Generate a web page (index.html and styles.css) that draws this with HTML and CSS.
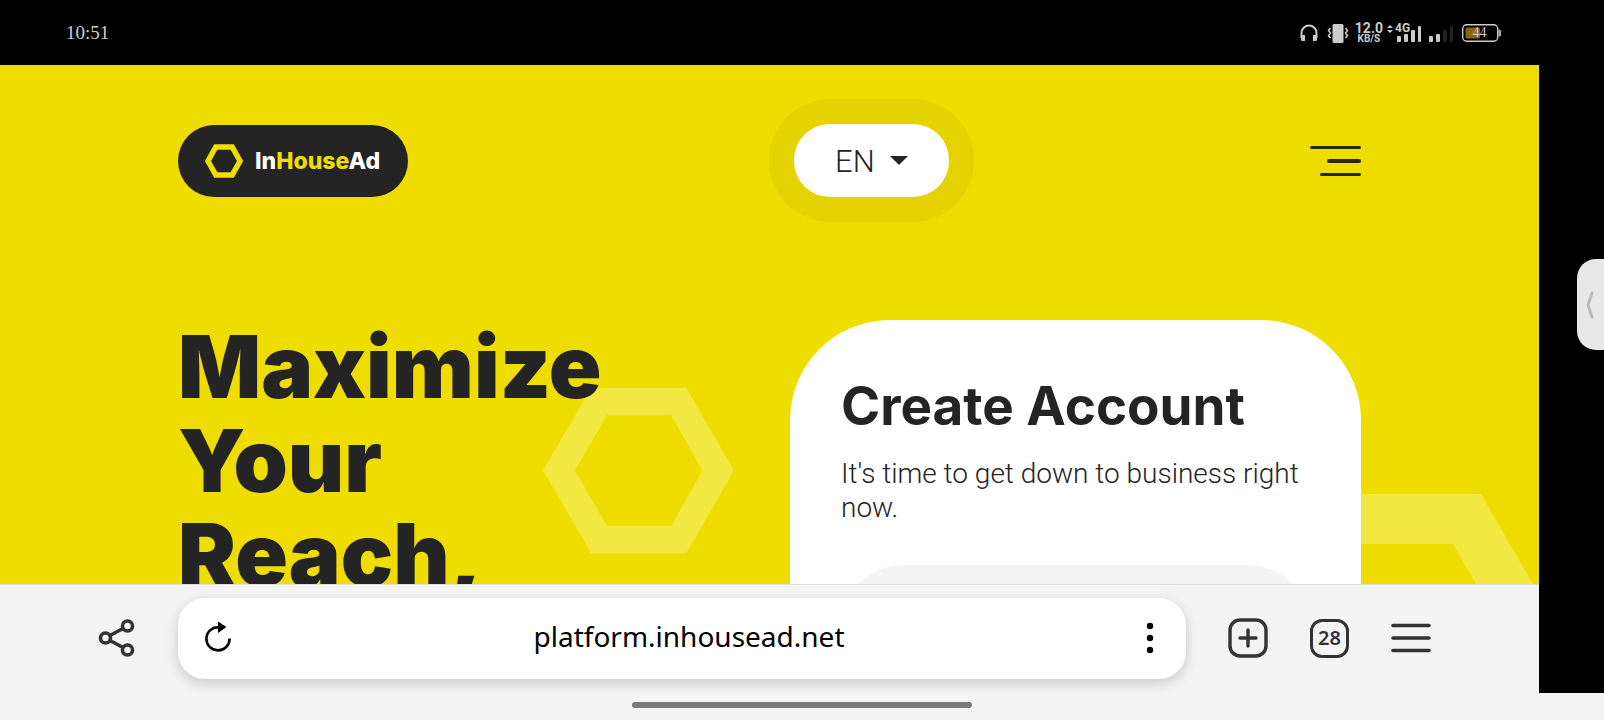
FILE: index.html
```html
<!DOCTYPE html>
<html lang="en">
<head>
<meta charset="utf-8">
<meta name="viewport" content="width=device-width, initial-scale=1">
<title>InHouseAd</title>
<link rel="stylesheet" href="styles.css">
</head>
<body>
<div class="screen">
  <div class="status">
    <time class="clock">10:51</time>
    <div class="status-icons">
      <svg class="headphones" width="18" height="18" viewBox="0 0 18 18"><path d="M1.500 14V9a7.500 7.500 0 0 1 15 0v5" fill="none" stroke="#ccc" stroke-width="2"/><path d="M1 11h4v6H2.500A1.500 1.500 0 0 1 1 15.500zM17 11h-4v6h2.500a1.500 1.500 0 0 0 1.500-1.500z" fill="#ccc"/></svg>
      <svg class="vibrate" width="22" height="20" viewBox="0 0 22 20"><rect x="5.500" y="1" width="11" height="19" rx="1.500" fill="#ccc"/><path d="M3.500 5 1.500 7.500l2 2.500-2 2.500 2 2.500M18.500 5l2 2.500-2 2.500 2 2.500-2 2.500" fill="none" stroke="#ccc" stroke-width="1.500"/></svg>
      <div class="speed"><span class="speed-value">12.0</span><span class="speed-unit">KB/S</span></div>
      <div class="network">
        <svg width="36" height="20" viewBox="0 0 36 20"><path d="M0 5 3 2l3 3zM0 7l3 3 3-3z" fill="#ccc"/><g fill="#ccc"><rect x="10" y="13" width="4" height="6" rx="1"/><rect x="17" y="11" width="4" height="8" rx="1"/><rect x="24" y="7" width="4" height="12" rx="1"/><rect x="31" y="3" width="3" height="16" rx="1"/></g></svg>
        <span class="network-type">4G</span>
      </div>
      <svg class="signal" width="24" height="20" viewBox="0 0 24 20"><g fill="#ccc"><rect x="0" y="13" width="4" height="6" rx="1"/><rect x="7" y="11" width="4" height="8" rx="1"/></g><g fill="#222"><rect x="14" y="7" width="4" height="12" rx="1"/><rect x="21" y="3" width="3" height="16" rx="1"/></g></svg>
      <div class="battery">
        <svg width="39" height="18" viewBox="0 0 39 18"><rect x=".7" y=".7" width="35" height="16.500" rx="4" fill="none" stroke="#ccc" stroke-width="1.400"/><rect x="3.500" y="3.500" width="14.500" height="11" rx="1.500" fill="#8c640e"/><path d="M36.500 5.500h1q1.500 0 1.500 1.500v4q0 1.500-1.500 1.500h-1z" fill="#aaa"/></svg>
        <span class="battery-level">44</span>
      </div>
    </div>
  </div>

  <div class="middle">
    <div class="browser">
      <main class="page">
        <svg class="hexagon hexagon-small" viewBox="0 0 191 165"><path fill-rule="evenodd" d="M48 0h95.500L191 82.500 143.500 165H48L0 82.500zM64 27 32 82.500 64 138h64l31.500-55.500L128 27z"/></svg>
        <svg class="hexagon hexagon-large" viewBox="0 0 353 305"><path fill-rule="evenodd" d="M88 0h177l88 152.500L265 305H88L0 152.500zM117 50 58 152.500 117 255h120l59-102.500L237 50z"/></svg>
        <header class="header columns">
          <div>
            <a class="logo" href="#">
              <svg width="38" height="34" viewBox="0 0 38 34"><path d="M10.800 3h16.400l7.800 14-7.800 14H10.800L3 17z" fill="none" stroke="#efdd00" stroke-width="5.500"/></svg>
              <span class="logo-name">In<span class="logo-accent">House</span>Ad</span>
            </a>
          </div>
          <div class="header-tools">
            <div class="language">
              <select class="language-select" aria-label="Language"><option>EN</option></select>
              <svg class="language-caret" width="18" height="9" viewBox="0 0 18 9"><path d="M0 0h18L9 9z" fill="#242424"/></svg>
            </div>
            <button class="menu-button" type="button" aria-label="Menu"><svg width="51" height="30" viewBox="0 0 51 30" stroke="#262a08" stroke-linecap="round"><path d="M1.500 1.500h48M11.500 28.500h38" stroke-width="3"/><path d="M19 15h30" stroke-width="4"/></svg></button>
          </div>
        </header>
        <div class="hero columns">
          <h1 class="headline">Maximize Your Reach,</h1>
          <form class="card">
            <h2 class="card-title">Create Account</h2>
            <p class="card-text">It's time to get down to business right now.</p>
            <input class="card-field" type="text" aria-label="Email">
          </form>
        </div>
      </main>
      <div class="toolbar">
        <button class="tool" type="button" aria-label="Share"><svg width="38" height="38" viewBox="0 0 38 38" fill="none" stroke="#333" stroke-width="3.600"><circle cx="7.500" cy="19" r="5"/><circle cx="29.500" cy="7" r="5"/><circle cx="29.500" cy="31" r="5"/><path d="m12 16.500 13-7M12 21.500l13 7"/></svg></button>
        <div class="address">
          <button class="tool" type="button" aria-label="Reload"><svg width="28" height="32" viewBox="0 0 28 32"><path d="M14.500 5.200A11.600 11.600 0 1 0 25.600 16.500" fill="none" stroke="#000" stroke-width="2.600"/><path d="M14-.5 22.500 5l-8.500 6z"/></svg></button>
          <input class="address-input" type="text" aria-label="Address" value="platform.inhousead.net">
          <button class="tool" type="button" aria-label="Page options"><svg width="8" height="32" viewBox="0 0 8 32"><circle cx="4" cy="4" r="3.200"/><circle cx="4" cy="16" r="3.200"/><circle cx="4" cy="28" r="3.200"/></svg></button>
        </div>
        <div class="tools">
          <button class="tool" type="button" aria-label="New tab"><svg width="40" height="40" viewBox="0 0 40 40" fill="none" stroke="#333" stroke-width="3.400" stroke-linecap="round"><rect x="2" y="2" width="36" height="36" rx="10"/><path d="M20 12v16M12 20h16"/></svg></button>
          <button class="tool tabs" type="button" aria-label="Tabs">28</button>
          <button class="tool" type="button" aria-label="Browser menu"><svg width="40" height="30" viewBox="0 0 40 30" stroke="#333" stroke-width="3.600" stroke-linecap="round"><path d="M2 2.500h36M2 15h36M2 27.500h36"/></svg></button>
        </div>
      </div>
    </div>
    <div class="cutout">
      <button class="handle" type="button" aria-label="Open sidebar"><svg width="8" height="28" viewBox="0 0 8 28"><path d="M6 2 2 14l4 12" fill="none" stroke="#bbb" stroke-width="3" stroke-linecap="round" stroke-linejoin="round"/></svg></button>
    </div>
  </div>
  <div class="gesture"><span class="gesture-bar"></span></div>
</div>
</body>
</html>
```
FILE: styles.css
```css
* {
  box-sizing: border-box;
}

body {
  margin: 0;
  color: #242424;
  font-family: Roboto, "Liberation Sans", sans-serif;
}

h1, h2, p {
  margin: 0;
}

button {
  padding: 0;
  border: 0;
  background: none;
  color: inherit;
}

svg {
  display: block;
}

.screen {
  display: flex;
  flex-direction: column;
  height: 100vh;
  overflow: hidden;
  background: #f4f4f4;
}

.status {
  display: flex;
  flex: none;
  align-items: center;
  justify-content: space-between;
  height: 65px;
  padding: 0 103px 0 66px;
  background: #000;
  color: #ccc;
}

.clock {
  font: 19px/24px "Liberation Serif", serif;
}

.status-icons {
  display: flex;
  align-items: center;
}

.vibrate {
  margin-left: 9px;
}

.speed {
  display: grid;
  justify-items: center;
  margin-left: 6px;
  font-weight: 700;
}

.speed-value {
  font-size: 14px;
  line-height: 12px;
}

.speed-unit {
  font-size: 10px;
  line-height: 10px;
}

.network {
  position: relative;
  margin-left: 4px;
}

.network-type {
  position: absolute;
  top: -1px;
  left: 8px;
  font-size: 12px;
  font-weight: 700;
  line-height: 12px;
}

.signal {
  margin-left: 6px;
}

.battery {
  display: grid;
  place-items: center;
  margin-left: 9px;
}

.battery > * {
  grid-area: 1 / 1;
}

.battery-level {
  padding-right: 4px;
  font: 14px/16px "Liberation Serif", serif;
}

.middle {
  display: flex;
  flex: 1;
  min-height: 0;
}

.browser {
  display: flex;
  flex: 1;
  flex-direction: column;
  min-width: 0;
}

.page {
  position: relative;
  flex: 1;
  min-height: 0;
  padding: 59px 178px 0;
  overflow: hidden;
  background: #efdd00;
}

.hexagon {
  position: absolute;
  fill: #f3e742;
}

.hexagon-small {
  top: 323px;
  left: 543px;
  width: 191px;
}

.hexagon-large {
  top: 429px;
  right: -30px;
  width: 353px;
}

.columns {
  position: relative;
  display: grid;
  grid-template-columns: 1fr 1fr;
  gap: 41px;
}

.header {
  align-items: center;
}

.logo {
  display: inline-flex;
  gap: 12px;
  align-items: center;
  height: 72px;
  padding: 0 28px 0 27px;
  border-radius: 36px;
  background: #242424;
  color: #fff;
  text-decoration: none;
}

.logo-name {
  font: 800 23px/28px Inter, sans-serif;
}

.logo-accent {
  color: #efdd00;
}

.header-tools {
  display: flex;
  align-items: center;
  justify-content: space-between;
  padding-left: 4px;
}

.language {
  position: relative;
  border-radius: 36px;
  box-shadow: 0 0 0 25px #e4d300;
}

.language-select {
  display: block;
  width: 155px;
  height: 73px;
  padding: 2px 41px 0;
  border: 0;
  border-radius: 36px;
  appearance: none;
  background: #fff;
  color: #242424;
  font: 300 31px/36px Roboto, sans-serif;
}

.language-caret {
  position: absolute;
  top: 32px;
  right: 41px;
  pointer-events: none;
}

.hero {
  margin-top: 123px;
}

.headline {
  max-width: 460px;
  font: 900 87px/94px Inter, sans-serif;
}

.card {
  padding: 58px 51px;
  border-radius: 100px;
  background: #fff;
}

.card-title {
  font: 700 53px/56px Inter, sans-serif;
}

.card-text {
  margin-top: 23px;
  font-size: 28px;
  font-weight: 300;
  line-height: 34px;
}

.card-field {
  width: 100%;
  height: 125px;
  margin-top: 40px;
  padding: 0 48px;
  border: 0;
  border-radius: 62px;
  background: #f4f4f4;
  font-size: 28px;
}

.toolbar {
  position: relative;
  display: flex;
  flex: none;
  gap: 42px;
  align-items: center;
  height: 109px;
  padding: 0 108px 2px 98px;
  border-top: 1px solid #ddd;
  background: #f4f4f4;
}

.address {
  display: flex;
  flex: 1;
  align-items: center;
  min-width: 0;
  height: 81px;
  padding: 0 32px 0 26px;
  border-radius: 27px;
  background: #fff;
  box-shadow: 0 4px 14px rgba(0, 0, 0, 0.18);
}

.address-input {
  flex: 1;
  min-width: 0;
  padding: 0 0 4px;
  border: 0;
  outline: 0;
  background: none;
  color: #000;
  font: 28px/40px "Noto Sans", sans-serif;
  text-align: center;
}

.tools {
  display: flex;
  gap: 42px;
  align-items: center;
}

.tabs {
  width: 39px;
  height: 39px;
  border: 3px solid #333;
  border-radius: 12px;
  color: #333;
  font: 600 20px/32px "Noto Sans", sans-serif;
}

.cutout {
  display: flex;
  flex: none;
  justify-content: flex-end;
  width: 65px;
  padding-top: 194px;
  background: #000;
}

.handle {
  width: 27px;
  height: 91px;
  padding-left: 9px;
  border-radius: 19px 0 0 19px;
  background: #e8e8e8;
}

.gesture {
  display: flex;
  flex: none;
  align-items: center;
  justify-content: center;
  height: 27px;
  padding-bottom: 4px;
}

.gesture-bar {
  width: 340px;
  height: 6px;
  border-radius: 3px;
  background: #7a7a7a;
}
```
